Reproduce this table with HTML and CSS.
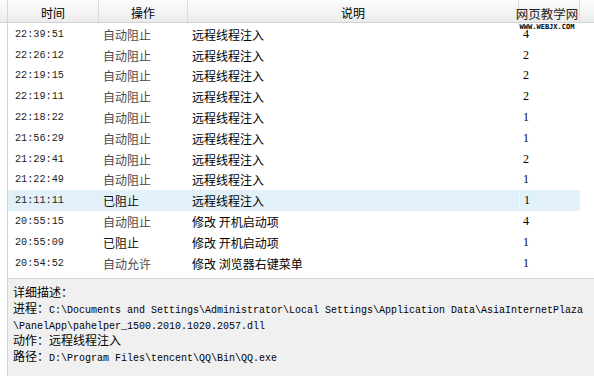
FILE: index.html
```html
<!DOCTYPE html>
<html lang="zh-CN">
<head>
  <meta charset="UTF-8">
  <title>拦截记录</title>
  <link rel="stylesheet" href="styles.css">
</head>
<body>
  <div class="log-panel">
    <div class="log-head">
      <div class="col">时间</div>
      <div class="col">操作</div>
      <div class="col">说明</div>
      <div class="col"></div>
      <div class="col tail"></div>
    </div>

    <div class="log-body">
      <div class="row"><span class="time">22:39:51</span><span class="act">自动阻止</span><span class="desc">远程线程注入</span><span class="num">4</span></div>
      <div class="row"><span class="time">22:26:12</span><span class="act">自动阻止</span><span class="desc">远程线程注入</span><span class="num">2</span></div>
      <div class="row"><span class="time">22:19:15</span><span class="act">自动阻止</span><span class="desc">远程线程注入</span><span class="num">2</span></div>
      <div class="row"><span class="time">22:19:11</span><span class="act">自动阻止</span><span class="desc">远程线程注入</span><span class="num">2</span></div>
      <div class="row"><span class="time">22:18:22</span><span class="act">自动阻止</span><span class="desc">远程线程注入</span><span class="num">1</span></div>
      <div class="row"><span class="time">21:56:29</span><span class="act">自动阻止</span><span class="desc">远程线程注入</span><span class="num">1</span></div>
      <div class="row"><span class="time">21:29:41</span><span class="act">自动阻止</span><span class="desc">远程线程注入</span><span class="num">2</span></div>
      <div class="row"><span class="time">21:22:49</span><span class="act">自动阻止</span><span class="desc">远程线程注入</span><span class="num">1</span></div>
      <div class="row selected"><span class="time">21:11:11</span><span class="act dark">已阻止</span><span class="desc">远程线程注入</span><span class="num">1</span></div>
      <div class="row"><span class="time">20:55:15</span><span class="act">自动阻止</span><span class="desc">修改 开机启动项</span><span class="num">4</span></div>
      <div class="row"><span class="time">20:55:09</span><span class="act dark">已阻止</span><span class="desc">修改 开机启动项</span><span class="num">1</span></div>
      <div class="row"><span class="time">20:54:52</span><span class="act">自动允许</span><span class="desc">修改 浏览器右键菜单</span><span class="num">1</span></div>
    </div>

    <div class="detail">
      <div class="line">详细描述：</div>
      <div class="line">进程：<span class="mono">C:\Documents and Settings\Administrator\Local Settings\Application Data\AsiaInternetPlaza</span></div>
      <div class="line"><span class="mono">\PanelApp\pahelper_1500.2010.1020.2057.dll</span></div>
      <div class="line">动作：远程线程注入</div>
      <div class="line">路径：<span class="mono">D:\Program Files\tencent\QQ\Bin\QQ.exe</span></div>
    </div>

    <div class="watermark">
      <div class="wm-title">网页教学网</div>
      <div class="wm-url">WWW.WEBJX.COM</div>
    </div>
  </div>
</body>
</html>
```

FILE: styles.css
```css
body {
  margin: 0;
  padding: 0;
  background: #fff;
  font-family: "Noto Sans CJK SC", "Noto Sans", sans-serif;
  font-size: 12px;
  color: #000;
  overflow: hidden;
}

.log-panel {
  position: relative;
  width: 594px;
  height: 376px;
  display: flex;
  flex-direction: column;
}

.log-head {
  height: 23px;
  display: grid;
  grid-template-columns: 8px 91px 89px 331px 61px 1fr;
  background: linear-gradient(to bottom, #fcfcfc, #f3f3f3 60%, #ebebeb);
  border-bottom: 1px solid #d2d2d2;
  box-sizing: border-box;
}

.log-head::before {
  content: "";
  border-right: 1px solid #d6d6d6;
}

.log-head .col {
  display: flex;
  align-items: center;
  justify-content: center;
  border-right: 1px solid #dcdcdc;
  line-height: 22px;
  padding-top: 2px;
}

.log-head .col.tail {
  border-right: none;
}

.log-body {
  height: 254px;
  padding-top: 1px;
  border-left: 1px solid #d6d6d6;
  margin-left: 7px;
  border-bottom: 1px solid #d4d4d4;
}

.row {
  height: 20.8px;
  width: 572px;
  display: grid;
  grid-template-columns: 91px 89px 331px 61px;
  align-items: center;
}

.row.selected {
  background: #e2f1f9;
}

.row.selected .num {
  border-left: 1px solid #f4fafd;
}

.time {
  font-family: "Liberation Mono", monospace;
  font-size: 10.2px;
  color: #222;
  padding-left: 7px;
}

.act {
  color: #4a4a4a;
  padding-left: 4px;
}

.act.dark {
  color: #111;
}

.desc {
  padding-left: 4px;
}

.num {
  font-family: "Liberation Serif", serif;
  font-size: 12px;
  padding-left: 4px;
}

.detail {
  flex: 1;
  background: #f0f0f0;
  border-left: 1px solid #d6d6d6;
  margin-left: 7px;
  padding: 5px 0 0 5px;
}

.line {
  height: 16px;
  line-height: 16px;
  white-space: nowrap;
}

.mono {
  font-family: "Liberation Mono", monospace;
  font-size: 10px;
}

.watermark {
  position: absolute;
  top: 5px;
  left: 512px;
  width: 70px;
  text-align: center;
  white-space: nowrap;
}

.wm-title {
  font-size: 12.5px;
  line-height: 17px;
  color: #222;
}

.wm-url {
  font-family: "DejaVu Sans Mono", monospace;
  font-size: 7px;
  font-weight: bold;
  line-height: 7px;
  color: #000;
  margin-top: 2px;
}
```
